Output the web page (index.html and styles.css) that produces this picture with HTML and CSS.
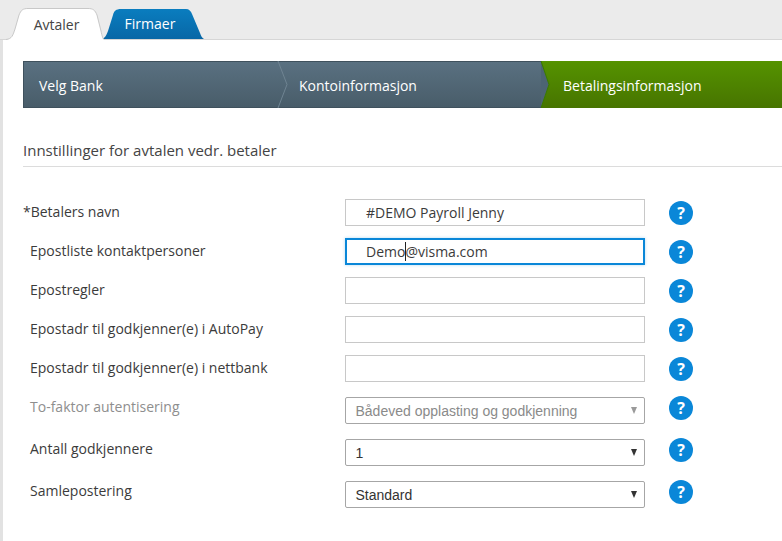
FILE: index.html
```html
<!DOCTYPE html>
<html lang="no">
<head>
<meta charset="utf-8">
<title>Avtaler</title>
<link rel="stylesheet" href="styles.css">
</head>
<body>
<header class="tabs">
  <div class="tab tab-active">
    <svg class="tab-shape" width="98" height="33" viewBox="0 0 98 33"><path d="M0 32.500C6 32 7 28 9 22L13 8C15 3 17 1.500 22 1.500H82C87 1.500 89 3 91 8L95 24C96 29 97 32 98 32.500V33H0Z" fill="#fff"/><path d="M0 32.500C6 32 7 28 9 22L13 8C15 3 17 1.500 22 1.500H82C87 1.500 89 3 91 8L95 24C96 29 97 32 98 32.500" fill="none" stroke="#c8c8c8"/></svg>
    <span class="tab-label">Avtaler</span>
  </div>
  <div class="tab tab-other">
    <svg class="tab-shape" width="102" height="30" viewBox="0 0 102 30"><defs><linearGradient id="tg" x1="0" y1="0" x2="0" y2="1"><stop offset="0" stop-color="#0a7dbf"/><stop offset="1" stop-color="#0867a6"/></linearGradient></defs><path d="M0 30C3 29 4 27 6 22L11 6C12 2 14 0 19 0H84C87 0 89 2 90 5L98 24C99 27 100 29 102 30Z" fill="url(#tg)"/></svg>
    <span class="tab-label">Firmaer</span>
  </div>
</header>
<main class="page">
  <nav class="steps">
    <div class="step step-first">Velg Bank</div>
    <div class="step step-second">Kontoinformasjon</div>
    <div class="step step-current">
      <svg class="step-tip" width="9" height="47" viewBox="0 0 9 47"><path d="M0 0L8 23.500L0 47Z" fill="#4d6474"/><path d="M0 0L8 23.500L0 47" fill="none" stroke="#3b7a00" stroke-width="1"/></svg>
      Betalingsinformasjon
    </div>
    <svg class="step-sep" width="11" height="47" viewBox="0 0 11 47"><path d="M1 0L10 23.500L1 47" fill="none" stroke="#6f8492" stroke-width="1"/></svg>
  </nav>
  <h2 class="section-title">Innstillinger for avtalen vedr. betaler</h2>
  <form class="form">
    <div class="row row-text">
      <label class="label label-required">*Betalers navn</label>
      <div class="field">#DEMO Payroll Jenny</div>
      <span class="help">?</span>
    </div>
    <div class="row row-text">
      <label class="label">Epostliste kontaktpersoner</label>
      <div class="field field-focus"><span>Demo</span><i class="caret"></i><span>@visma.com</span></div>
      <span class="help">?</span>
    </div>
    <div class="row row-text">
      <label class="label">Epostregler</label>
      <div class="field"></div>
      <span class="help">?</span>
    </div>
    <div class="row row-text">
      <label class="label">Epostadr til godkjenner(e) i AutoPay</label>
      <div class="field"></div>
      <span class="help">?</span>
    </div>
    <div class="row row-text">
      <label class="label">Epostadr til godkjenner(e) i nettbank</label>
      <div class="field"></div>
      <span class="help">?</span>
    </div>
    <div class="row row-select row-disabled">
      <label class="label">To-faktor autentisering</label>
      <div class="select"><span>Bådeved opplasting og godkjenning</span><i class="arrow"></i></div>
      <span class="help">?</span>
    </div>
    <div class="row row-select">
      <label class="label">Antall godkjennere</label>
      <div class="select"><span>1</span><i class="arrow"></i></div>
      <span class="help">?</span>
    </div>
    <div class="row row-select">
      <label class="label">Samlepostering</label>
      <div class="select"><span>Standard</span><i class="arrow"></i></div>
      <span class="help">?</span>
    </div>
  </form>
</main>
</body>
</html>
```

FILE: styles.css
```css
html, body {
  margin: 0;
  height: 100%;
  overflow: hidden;
}
body {
  width: 782px;
  height: 541px;
  background: #fff;
  color: #3b3b3b;
  font-family: "Open Sans", sans-serif;
  font-size: 14px;
}
.tabs {
  height: 39px;
  background: #ebebeb;
  border-bottom: 1px solid #d6d6d6;
  display: flex;
  align-items: flex-end;
  padding-left: 6px;
}
.tab {
  position: relative;
  display: flex;
  justify-content: center;
}
.tab-active {
  width: 98px;
  height: 33px;
  margin-bottom: -1px;
  z-index: 1;
}
.tab-other {
  width: 102px;
  height: 30px;
  margin-left: -2px;
}
.tab-shape {
  position: absolute;
  left: 0;
  top: 0;
}
.tab-label {
  position: relative;
  font-size: 14px;
  line-height: 20px;
}
.tab-active .tab-label {
  color: #444;
  padding-top: 8px;
  margin-left: 3px;
}
.tab-other .tab-label {
  color: #fff;
  padding-top: 5px;
  margin-left: -6px;
}
.page {
  border-left: 3px solid #e2e2e2;
  height: 501px;
  padding: 21px 0 0 20px;
  box-sizing: border-box;
}
.steps {
  position: relative;
  display: flex;
  height: 47px;
  color: #fff;
  line-height: 49px;
}
.step {
  background: linear-gradient(#5a7181, #485c69);
  height: 47px;
  box-shadow: inset 0 1px 0 #3f515d, inset 0 -1px 0 #3f515d;
  box-sizing: border-box;
  white-space: nowrap;
}
.step-first {
  width: 254px;
  padding-left: 16px;
  box-shadow: inset 0 1px 0 #3f515d, inset 0 -1px 0 #3f515d, inset 1px 0 0 #3f515d;
}
.step-second {
  width: 264px;
  padding-left: 22px;
}
.step-current {
  position: relative;
  flex: 1;
  padding-left: 22px;
  background: linear-gradient(#559300, #477400);
  box-shadow: none;
}
.step-tip {
  position: absolute;
  left: 0;
  top: 0;
}
.step-sep {
  position: absolute;
  left: 254px;
  top: 0;
}
.section-title {
  margin: 31px 0 0;
  height: 27px;
  font-size: 15px;
  font-weight: 400;
  line-height: 22px;
  color: #444;
  border-bottom: 1px solid #dcdcdc;
}
.form {
  padding-top: 32px;
}
.row {
  display: flex;
  align-items: center;
  height: 27px;
}
.row-text {
  margin-bottom: 12px;
}
.row-select {
  margin-bottom: 15px;
}
.row-text:nth-child(5) {
  margin-bottom: 15px;
}
.label {
  width: 322px;
  padding-left: 7px;
  box-sizing: border-box;
  color: #3b3b3b;
  position: relative;
  top: -1px;
}
.label-required {
  padding-left: 0;
}
.row-disabled .label {
  color: #8e8e8e;
}
.row-select .label {
  top: -4px;
}
.field,
.select {
  width: 300px;
  height: 27px;
  box-sizing: border-box;
  background: #fff;
  display: flex;
  align-items: center;
  white-space: nowrap;
}
.field {
  border: 1px solid #c8c8c8;
  padding-left: 20px;
  color: #3b3b3b;
  line-height: 25px;
}
.field-focus {
  border: 2px solid #0a87d8;
  padding-left: 19px;
  box-shadow: 0 0 3px rgba(10, 135, 216, 0.3);
}
.caret {
  width: 1px;
  height: 19px;
  background: #222;
  margin-right: -1px;
}
.select {
  border: 1px solid #a6a6a6;
  border-radius: 2px;
  padding: 1px 7px 0 9.5px;
  justify-content: space-between;
  font-family: "Liberation Sans", Arial, sans-serif;
  font-size: 14px;
  color: #333;
}
.row-disabled .select {
  color: #8a8a8a;
}
.arrow {
  width: 0;
  height: 0;
  border-left: 3.5px solid transparent;
  border-right: 3.5px solid transparent;
  border-top: 7px solid #333;
  margin-top: -2px;
}
.row-disabled .arrow {
  border-top-color: #9a9a9a;
}
.help {
  position: relative;
  width: 24px;
  height: 24px;
  margin-left: 24px;
  border-radius: 50%;
  background: #0a87d8;
  color: #fff;
  font-size: 16px;
  font-weight: 700;
  line-height: 24px;
  text-align: center;
  flex: none;
}
.row-select .help {
  top: -3px;
}
```
